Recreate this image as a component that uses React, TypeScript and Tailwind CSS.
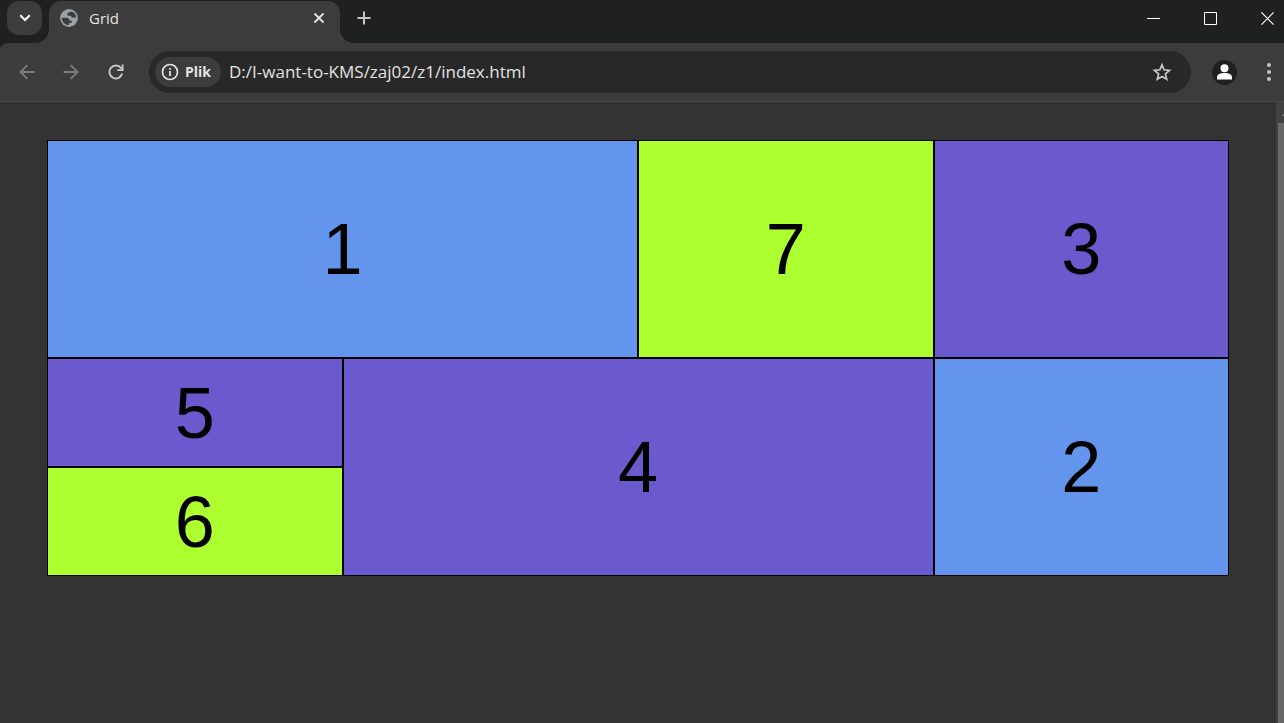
import type { ReactNode } from "react";

const cells = [
  { label: "1", area: "col-span-2 row-span-2", color: "bg-[#6495ed]" },
  { label: "7", area: "row-span-2", color: "bg-[#adff2f]" },
  { label: "3", area: "row-span-2", color: "bg-[#6a5acd]" },
  { label: "5", area: "", color: "bg-[#6a5acd]" },
  { label: "4", area: "col-span-2 row-span-2", color: "bg-[#6a5acd]" },
  { label: "2", area: "row-span-2", color: "bg-[#6495ed]" },
  { label: "6", area: "col-start-1", color: "bg-[#adff2f]" },
];

function IconButton({ label, className, children }: { label: string; className: string; children: ReactNode }) {
  return (
    <button type="button" aria-label={label} className={`flex shrink-0 items-center justify-center ${className}`}>
      {children}
    </button>
  );
}

function TabStrip() {
  return (
    <header className="flex h-[43px] items-start bg-[#1f2120] pl-[7px]">
      <IconButton label="Search tabs" className="mt-px h-[34px] w-[35px] rounded-xl bg-[#3c3c3c] text-white">
        <svg width="12" height="8" viewBox="0 0 12 8" fill="none" stroke="currentColor" strokeWidth="2">
          <path d="M1.2 1.2 6 6l4.800-4.800" />
        </svg>
      </IconButton>
      <div className="relative ml-[7px] mt-px flex h-[42px] w-[291px] items-start rounded-t-xl bg-[#3c3c3c] pl-2.5 pr-3">
        <svg className="absolute -left-3.5 bottom-0 text-[#3c3c3c]" width="14" height="14" viewBox="0 0 14 14">
          <path fill="currentColor" d="M14 0v14H0A14 14 0 0 0 14 0Z" />
        </svg>
        <svg className="absolute -right-3.5 bottom-0 text-[#3c3c3c]" width="14" height="14" viewBox="0 0 14 14">
          <path fill="currentColor" d="M0 0v14h14A14 14 0 0 1 0 0Z" />
        </svg>
        <div className="flex h-[34px] w-full items-center">
          <svg width="20" height="20" viewBox="0 0 20 20">
            <circle cx="10" cy="10" r="8.900" fill="#9aa0a6" />
            <path
              fill="#3c3c3c"
              d="M11.900 3.200A7.100 7.100 0 0 1 17.100 9.600h-3.200c-1.200 0-1.900-.7-1.900-1.800H8.500V6c0-1.100.7-1.800 1.700-1.800h.8c.5 0 .9-.4.9-1ZM2.900 9.700h4.600c1.900 0 2.900 1 2.900 2.700h2.300v1.800c0 .5-.4.900-.9.900H10v2A7.100 7.100 0 0 1 2.900 9.700Z"
            />
          </svg>
          <span className="ml-2.5 flex-1 text-[15px] leading-5 text-[#e3e3e3]">Grid</span>
          <IconButton label="Close tab" className="size-[18px] text-[#e3e3e3]">
            <svg width="12" height="12" viewBox="0 0 12 12" fill="none" stroke="currentColor" strokeWidth="1.800">
              <path d="m1.500 1.500 9 9m0-9-9 9" />
            </svg>
          </IconButton>
        </div>
      </div>
      <IconButton label="New tab" className="ml-3.5 size-[36px] text-[#c7c7c7]">
        <svg className="-ml-4" width="14" height="14" viewBox="0 0 14 14" fill="none" stroke="currentColor" strokeWidth="2">
          <path d="M7 .5v13M.5 7h13" />
        </svg>
      </IconButton>
      <div className="ml-auto flex h-[37px] text-white">
        <IconButton label="Minimize" className="w-[57px]">
          <svg width="13" height="13" viewBox="0 0 13 13" shapeRendering="crispEdges">
            <path fill="currentColor" d="M0 6h13v1H0z" />
          </svg>
        </IconButton>
        <IconButton label="Maximize" className="w-[57px]">
          <svg width="13" height="13" viewBox="0 0 13 13" fill="none" stroke="currentColor">
            <path d="M.5.5h12v12H.5z" />
          </svg>
        </IconButton>
        <IconButton label="Close window" className="w-[45px] pl-3">
          <svg width="13" height="13" viewBox="0 0 13 13" fill="none" stroke="currentColor" strokeWidth="1.200">
            <path d="m.4.4 12.200 12.200m0-12.200L.4 12.600" />
          </svg>
        </IconButton>
      </div>
    </header>
  );
}

function Toolbar() {
  return (
    <div className="bg-[#1f2120]">
      <nav className="flex h-[59px] items-center rounded-tl-lg border-b border-[#474747] bg-[#3c3c3c] pl-[15px]">
        <IconButton label="Back" className="size-6 text-[#7c7c7c]">
          <svg width="16" height="16" viewBox="0 0 16 16" fill="none" stroke="currentColor" strokeWidth="1.800">
            <path d="M15.500 8H1.800M8.300 1.200 1.500 8l6.800 6.800" />
          </svg>
        </IconButton>
        <IconButton label="Forward" className="ml-5 size-6 text-[#7c7c7c]">
          <svg width="16" height="16" viewBox="0 0 16 16" fill="none" stroke="currentColor" strokeWidth="1.800">
            <path d="M.5 8h13.700M7.700 1.200 14.500 8l-6.800 6.800" />
          </svg>
        </IconButton>
        <IconButton label="Reload" className="ml-[21px] size-6 text-[#c7c7c7]">
          <svg width="16" height="16" viewBox="0 0 16 16" fill="none" stroke="currentColor" strokeWidth="1.900">
            <path d="M14.200 9.600A6.500 6.500 0 1 1 13 3.900l1.500 1.800" />
            <path d="M14.600.5v5.600H9.200" />
          </svg>
        </IconButton>
        <div className="ml-[21px] flex h-[42px] flex-1 items-center rounded-full bg-[#282828] pl-1.5 pr-[19px]">
          <button type="button" className="flex h-[30px] items-center gap-1.5 rounded-full bg-[#3c3c3c] pl-1.5 pr-2.5 text-[#e3e3e3]">
            <svg width="18" height="18" viewBox="0 0 18 18">
              <circle cx="9" cy="9" r="7.500" fill="none" stroke="currentColor" strokeWidth="1.700" />
              <path fill="currentColor" d="M8.100 8h1.800v5H8.100zM8.100 5h1.800v1.800H8.100z" />
            </svg>
            <span className="text-sm font-bold leading-5">Plik</span>
          </button>
          <input
            type="text"
            aria-label="Address"
            defaultValue="D:/I-want-to-KMS/zaj02/z1/index.html"
            className="ml-2 min-w-0 flex-1 bg-transparent text-[17px] leading-6 text-[#e3e3e3] outline-none"
          />
          <IconButton label="Bookmark" className="size-5 text-[#c7c7c7]">
            <svg width="20" height="20" viewBox="0 0 20 20" fill="none" stroke="currentColor" strokeWidth="1.700">
              <path d="m10 2.800 2.100 5 5.500.5-4.200 3.600 1.300 5.300-4.700-2.800-4.700 2.800 1.300-5.300-4.200-3.600 5.500-.5Z" />
            </svg>
          </IconButton>
        </div>
        <IconButton label="Profile" className="ml-[21px] size-[25px] rounded-full bg-[#1f2120] text-white">
          <svg width="15" height="16" viewBox="0 0 15 16" fill="currentColor">
            <circle cx="7.500" cy="4.200" r="4" />
            <path d="M0 15.500v-2.200c0-3 3.700-4.200 7.500-4.200s7.500 1.200 7.500 4.200v2.200Z" />
          </svg>
        </IconButton>
        <IconButton label="Menu" className="ml-5 mr-[3px] size-6 text-[#c7c7c7]">
          <svg width="4" height="18" viewBox="0 0 4 18" fill="currentColor">
            <circle cx="2" cy="2" r="2" />
            <circle cx="2" cy="9" r="2" />
            <circle cx="2" cy="16" r="2" />
          </svg>
        </IconButton>
      </nav>
    </div>
  );
}

export default function App() {
  return (
    <div className="flex min-h-screen flex-col overflow-hidden font-['Open_Sans','Noto_Sans',sans-serif]">
      <TabStrip />
      <Toolbar />
      <div className="flex flex-1 bg-[#333333]">
        <main className="flex-1 px-[47px] pt-[38px]">
          <div className="grid auto-rows-[109px] grid-cols-4 font-['Liberation_Sans',Arial,sans-serif] text-7xl text-black">
            {cells.map((cell) => (
              <div key={cell.label} className={`flex items-center justify-center border border-black ${cell.area} ${cell.color}`}>
                {cell.label}
              </div>
            ))}
          </div>
        </main>
        <div aria-hidden="true" className="flex w-2 flex-col bg-[#424242] pl-0.5">
          <svg className="h-[21px] w-1.5" viewBox="0 0 6 21">
            <path fill="#9a9a9a" d="M4 14l2-2v2Z" />
          </svg>
          <div className="flex-1 bg-[#686868]" />
        </div>
      </div>
    </div>
  );
}
